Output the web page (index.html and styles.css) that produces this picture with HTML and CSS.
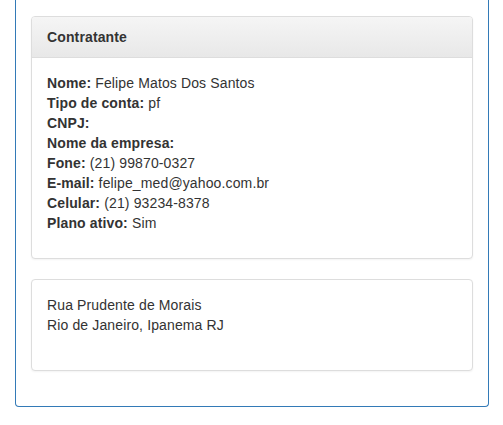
FILE: index.html
```html
<!DOCTYPE html>
<html>
<head>
<meta charset="utf-8">
<link rel="stylesheet" href="styles.css">
</head>
<body>
<div class="outer">
  <div class="panel">
    <div class="panel-heading">Contratante</div>
    <div class="panel-body">
      <p class="info">
        <b>Nome:</b> Felipe Matos Dos Santos<br>
        <b>Tipo de conta:</b> pf<br>
        <b>CNPJ:</b><br>
        <b>Nome da empresa:</b><br>
        <b>Fone:</b> (21) 99870-0327<br>
        <b>E-mail:</b> felipe_med@yahoo.com.br<br>
        <b>Celular:</b> (21) 93234-8378<br>
        <b>Plano ativo:</b> Sim
      </p>
    </div>
  </div>
  <div class="panel">
    <div class="panel-body">
      <address class="addr">
        Rua Prudente de Morais<br>
        Rio de Janeiro, Ipanema RJ
      </address>
    </div>
  </div>
</div>
</body>
</html>
```
FILE: styles.css
```css
html, body {
  margin: 0;
  padding: 0;
  background: #fff;
}
body {
  font-family: "Liberation Sans", Arial, Helvetica, sans-serif;
  font-size: 14px;
  line-height: 20px;
  color: #333;
  letter-spacing: 0.13px;
}
.outer {
  box-sizing: border-box;
  width: 474px;
  margin-left: 15px;
  padding: 16px 15px 15px;
  border: 1px solid #337ab7;
  border-top: none;
  border-radius: 0 0 4px 4px;
}
.panel {
  background: #fff;
  border: 1px solid #ddd;
  border-radius: 4px;
  margin-bottom: 20px;
  box-shadow: 0 1px 2px rgba(0,0,0,.05);
}
.panel-heading {
  padding: 10px 15px;
  font-weight: bold;
  color: #333;
  background: linear-gradient(to bottom, #f5f5f5 0%, #e8e8e8 100%);
  border-bottom: 1px solid #ddd;
  border-radius: 3px 3px 0 0;
}
.panel-body {
  padding: 15px;
}
.info {
  margin: 0 0 10px;
}
.addr {
  margin: 0 0 20px;
  font-style: normal;
}
```
